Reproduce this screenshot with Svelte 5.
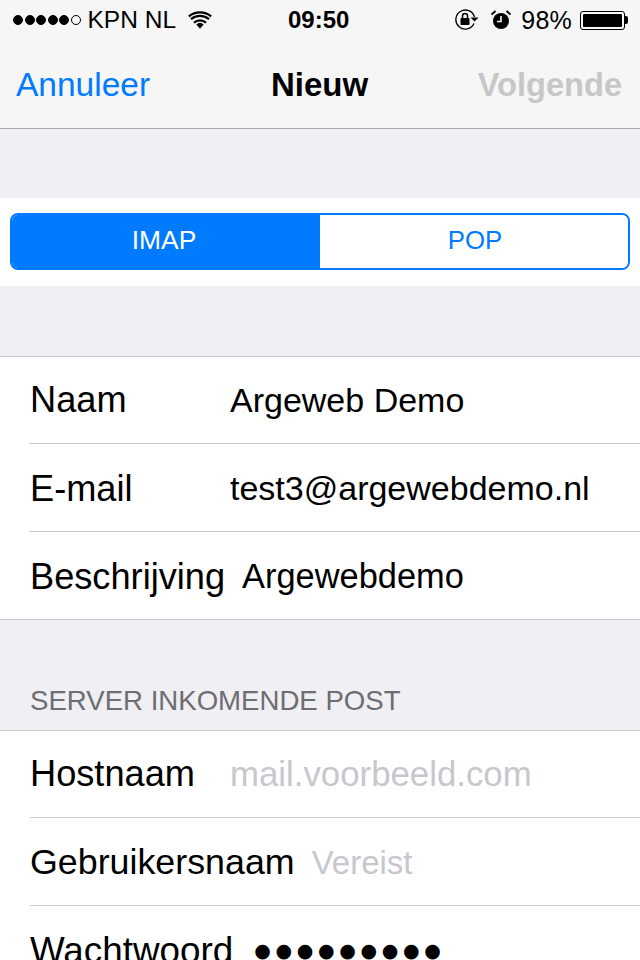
<script>
  const account = [
    { label: 'Naam', value: 'Argeweb Demo' },
    { label: 'E-mail', value: 'test3@argewebdemo.nl' },
    { label: 'Beschrijving', value: 'Argewebdemo', tight: true }
  ];
  const signal = [1, 1, 1, 1, 1, 0];
</script>

<div class="screen">
  <header class="nav">
    <div class="status">
      <div class="status-left">
        <span class="signal">
          {#each signal as on}
            <i class:on></i>
          {/each}
        </span>
        <span class="carrier">KPN NL</span>
        <svg class="wifi" width="24" height="19" viewBox="0 0 26 20">
          <path d="M13 19 9 14.2a6 6 0 0 1 8 0Z" fill="#000"/>
          <path d="M6.4 11.4a10 10 0 0 1 13.2 0M3.2 7.6a15 15 0 0 1 19.6 0M.9 4.6a19 19 0 0 1 24.2 0" transform="translate(0 1)" fill="none" stroke="#000" stroke-width="2.4"/>
        </svg>
      </div>
      <span class="time">09:50</span>
      <div class="status-right">
        <svg class="lock" width="24" height="22" viewBox="0 0 24 22">
          <path d="M19 14.500A9.500 9.500 0 1 1 19.500 8" fill="none" stroke="#000" stroke-width="1.300"/>
          <path d="M15.500 8.500h8l-4 4Z" fill="#000"/>
          <rect x="5.500" y="9" width="9" height="7" rx="1" fill="#000"/>
          <path d="M7.500 9V7a2.500 2.500 0 0 1 5 0v2" fill="none" stroke="#000" stroke-width="1.500"/>
        </svg>
        <svg class="alarm" width="20" height="20" viewBox="0 0 20 20">
          <circle cx="10" cy="11" r="8" fill="#000"/>
          <path d="M10 6v5.500H6" fill="none" stroke="#f6f6f7" stroke-width="1.600"/>
          <path d="M.5 4.500 4.500 1M19.500 4.500 15.500 1" fill="none" stroke="#000" stroke-width="1.800"/>
        </svg>
        <span class="percent">98%</span>
        <span class="battery"><b></b></span>
        <span class="nub"></span>
      </div>
    </div>
    <div class="bar">
      <span class="cancel">Annuleer</span>
      <span class="title">Nieuw</span>
      <span class="next">Volgende</span>
    </div>
  </header>

  <section class="segment-wrap">
    <div class="segment">
      <span class="seg active">IMAP</span>
      <span class="seg">POP</span>
    </div>
  </section>

  <section class="group first">
    {#each account as row}
      <div class="row">
        <span class="label" class:tight={row.tight}>{row.label}</span>
        <span class="value" class:shifted={row.tight}>{row.value}</span>
      </div>
    {/each}
  </section>

  <h2 class="group-title">SERVER INKOMENDE POST</h2>

  <section class="group">
    <div class="row">
      <span class="label">Hostnaam</span>
      <span class="value ph">mail.voorbeeld.com</span>
    </div>
    <div class="row">
      <span class="label tight narrow">Gebruikersnaam</span>
      <span class="value ph short">Vereist</span>
    </div>
    <div class="row">
      <span class="label tight wide">Wachtwoord</span>
      <span class="dots">●●●●●●●●●</span>
    </div>
  </section>
</div>

<style>
  :global(body) {
    margin: 0;
    background: #efeff4;
  }
  .screen {
    width: 640px;
    height: 960px;
    overflow: hidden;
    background: #efeff4;
    font-family: "Liberation Sans", Arial, sans-serif;
    color: #000;
  }
  .nav {
    height: 128px;
    background: #f6f6f7;
    border-bottom: 1px solid #a9a9ae;
    display: flex;
    flex-direction: column;
  }
  .status {
    height: 40px;
    display: flex;
    align-items: center;
    justify-content: space-between;
    position: relative;
    font-size: 24.500px;
    padding: 0 12px 0 13px;
  }
  .status-left, .status-right {
    display: flex;
    align-items: center;
  }
  .signal {
    display: flex;
    gap: 1.500px;
  }
  .signal i {
    width: 10px;
    height: 10px;
    box-sizing: border-box;
    border: 1px solid #000;
    border-radius: 50%;
  }
  .signal i.on {
    background: #000;
  }
  .carrier {
    margin-left: 7px;
  }
  .wifi {
    margin-left: 12px;
  }
  .time {
    position: absolute;
    left: 288px;
    font-weight: 700;
    font-size: 24px;
  }
  .lock {
    margin-right: 12px;
  }
  .percent {
    margin-left: 10px;
    letter-spacing: 0.200px;
    font-size: 25px;
  }
  .battery {
    margin-left: 8px;
    width: 45px;
    height: 19px;
    box-sizing: border-box;
    border: 1px solid #000;
    border-radius: 3px;
    padding: 2px;
    display: flex;
  }
  .battery b {
    flex: 1;
    background: #000;
    border-radius: 1px;
  }
  .nub {
    width: 3px;
    height: 8px;
    background: #000;
    border-radius: 0 2px 2px 0;
  }
  .bar {
    flex: 1;
    display: flex;
    align-items: center;
    position: relative;
    padding: 2px 18px 0 16px;
    justify-content: space-between;
    font-size: 33.500px;
  }
  .cancel {
    color: #007aff;
  }
  .title {
    position: absolute;
    left: 271px;
    font-weight: 700;
    font-size: 33px;
  }
  .next {
    color: #c7c7c8;
    font-weight: 700;
    font-size: 32.600px;
  }
  .segment-wrap {
    margin-top: 69px;
    background: #fff;
    height: 88px;
    padding: 15px 10px;
    box-sizing: border-box;
  }
  .segment {
    height: 57px;
    box-sizing: border-box;
    border: 2px solid #007aff;
    border-radius: 8px;
    display: flex;
    overflow: hidden;
  }
  .seg {
    flex: 1;
    display: flex;
    align-items: center;
    justify-content: center;
    font-size: 25.800px;
    color: #007aff;
    background: #fff;
    padding: 0 0 2px 2px;
  }
  .seg.active {
    flex: 0 0 308px;
    box-sizing: border-box;
    background: #007aff;
    color: #fff;
    padding: 0 4px 2px 0;
    font-size: 26.400px;
  }
  .group {
    background: #fff;
    border-top: 1px solid #c8c7cc;
    border-bottom: 1px solid #c8c7cc;
    padding-left: 30px;
  }
  .group.first {
    margin-top: 70px;
  }
  .group-title {
    margin: 0;
    height: 110px;
    box-sizing: border-box;
    padding: 66px 0 0 30px;
    font-size: 27.600px;
    line-height: 30px;
    font-weight: 400;
    color: #6d6d72;
  }
  .row {
    height: 85px;
    padding-top: 2px;
    display: flex;
    align-items: center;
    font-size: 34px;
    border-bottom: 1px solid #c8c7cc;
  }
  .row:first-child {
    height: 86px;
    padding-top: 0;
  }
  .row:last-child {
    border-bottom: 0;
  }
  .label {
    flex: 0 0 200px;
    font-size: 36.200px;
  }
  .label.tight {
    flex: 0 0 auto;
    margin-right: 17px;
  }
  .label.narrow {
    font-size: 35.800px;
  }
  .label.wide {
    font-size: 36.800px;
  }
  .value {
    white-space: nowrap;
    font-size: 34px;
  }
  .value.shifted {
    font-size: 34.400px;
  }
  .ph {
    font-size: 34.800px;
    color: #c7c7cd;
  }
  .ph.short {
    font-size: 33px;
  }
  .dots {
    font-family: "DejaVu Sans", sans-serif;
    font-size: 19px;
    letter-spacing: 4.700px;
    margin-left: 4px;
    position: relative;
    top: -1px;
  }
</style>
